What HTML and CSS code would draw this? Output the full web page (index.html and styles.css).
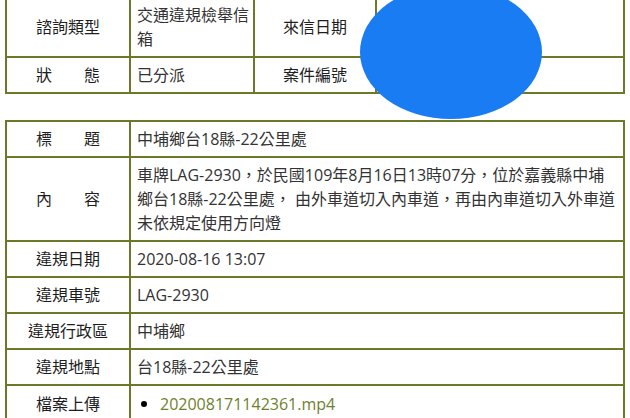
FILE: index.html
```html
<!DOCTYPE html>
<html lang="zh-Hant">
<head>
<meta charset="utf-8">
<title>案件資料</title>
<link rel="stylesheet" href="styles.css">
</head>
<body>
<div class="page">
  <table class="info info-top">
    <colgroup>
      <col class="c-label"><col class="c-val-sm"><col class="c-label2"><col class="c-val-lg">
    </colgroup>
    <tr>
      <th><span class="lbl">諮詢類型</span></th>
      <td>交通違規檢舉信箱</td>
      <th><span class="lbl">來信日期</span></th>
      <td></td>
    </tr>
    <tr>
      <th><span class="lbl spread">狀態</span></th>
      <td>已分派</td>
      <th><span class="lbl">案件編號</span></th>
      <td></td>
    </tr>
  </table>

  <table class="info info-main">
    <colgroup>
      <col class="c-label"><col class="c-val-wide">
    </colgroup>
    <tr>
      <th><span class="lbl spread">標題</span></th>
      <td>中埔鄉台18縣-22公里處</td>
    </tr>
    <tr>
      <th><span class="lbl spread">內容</span></th>
      <td>車牌LAG-2930，於民國109年8月16日13時07分，位於嘉義縣中埔鄉台18縣-22公里處， 由外車道切入內車道，再由內車道切入外車道未依規定使用方向燈</td>
    </tr>
    <tr>
      <th><span class="lbl">違規日期</span></th>
      <td>2020-08-16 13:07</td>
    </tr>
    <tr>
      <th><span class="lbl">違規車號</span></th>
      <td>LAG-2930</td>
    </tr>
    <tr>
      <th><span class="lbl">違規行政區</span></th>
      <td>中埔鄉</td>
    </tr>
    <tr>
      <th><span class="lbl">違規地點</span></th>
      <td>台18縣-22公里處</td>
    </tr>
    <tr>
      <th><span class="lbl">檔案上傳</span></th>
      <td>
        <ul class="files"><li><a href="#">202008171142361.mp4</a></li></ul>
      </td>
    </tr>
  </table>

  <div class="redact"></div>
</div>
</body>
</html>
```

FILE: styles.css
```css
html, body {
  margin: 0;
  padding: 0;
  background: #ffffff;
}

body {
  font-family: "Open Sans", "Noto Sans CJK TC", sans-serif;
  font-size: 16px;
  line-height: 24px;
  color: #333333;
  overflow: hidden;
}

.page {
  position: relative;
  padding: 0 0 0 5px;
  margin-top: -4px;
}

.info {
  border-collapse: collapse;
  table-layout: fixed;
  width: 620px;
  border: 2px solid #6b7a28;
}

.info th,
.info td {
  border: 2px solid #6b7a28;
  padding: 5px 3px 5px 6px;
  vertical-align: middle;
}

.info th {
  font-weight: normal;
  color: #1e1e1e;
  text-align: center;
  padding: 5px 2px;
}

.info td {
  text-align: left;
}

.c-label { width: 124px; }
.c-val-sm { width: 124px; }
.c-label2 { width: 122px; }
.c-val-lg { width: 248px; }
.c-val-wide { width: 494px; }

.info-main {
  margin-top: 26px;
}

.lbl {
  display: inline-block;
  white-space: nowrap;
}

.lbl.spread {
  width: 64px;
  text-align: justify;
  text-align-last: justify;
}

.files {
  margin: 0;
  padding: 0 0 0 23px;
  list-style: disc;
}

.files li {
  color: #000000;
}

.files li::marker {
  font-size: 18px;
}

.files a {
  color: #6f7f2e;
  text-decoration: none;
}

.redact {
  position: absolute;
  left: 360px;
  top: -11px;
  width: 182px;
  height: 134px;
  border-radius: 50%;
  background: #1a7cf2;
}
```
